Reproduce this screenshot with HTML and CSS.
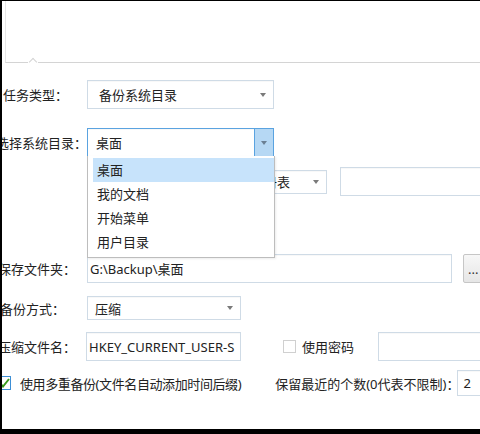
FILE: index.html
```html
<html>
<head>
  <title>备份任务</title>
  <meta charset="utf-8">
  <link rel="stylesheet" href="styles.css">
</head>
<body>
  <div class="window">
    <div class="topbar">
      <span class="tab-notch"></span>
    </div>
    <div class="form">
      <div class="row row-type">
        <label class="lbl lbl-type">任务类型：</label>
        <div class="combo combo-type">
          <span class="value">备份系统目录</span>
          <i class="caret"></i>
        </div>
      </div>

      <div class="row row-dir">
        <label class="lbl lbl-dir">选择系统目录：</label>
        <div class="combo combo-dir focused">
          <span class="value">桌面</span>
          <span class="drop-btn"><i class="caret"></i></span>
          <ul class="droplist">
            <li class="selected">桌面</li>
            <li>我的文档</li>
            <li>开始菜单</li>
            <li>用户目录</li>
          </ul>
        </div>
      </div>

      <div class="row row-reg">
        <span class="lbl"></span>
        <div class="combo combo-hive">
          <span class="value">当前用户</span>
          <i class="caret"></i>
        </div>
        <div class="combo combo-reg">
          <span class="value">注册表</span>
          <i class="caret"></i>
        </div>
        <div class="field field-reg"></div>
      </div>

      <div class="row row-folder">
        <label class="lbl lbl-folder">保存文件夹：</label>
        <div class="field field-folder">G:\Backup\桌面</div>
        <button class="browse">...</button>
      </div>

      <div class="row row-mode">
        <label class="lbl lbl-mode">备份方式：</label>
        <div class="combo combo-mode">
          <span class="value">压缩</span>
          <i class="caret"></i>
        </div>
      </div>

      <div class="row row-name">
        <label class="lbl lbl-name">压缩文件名：</label>
        <div class="field field-name">HKEY_CURRENT_USER-S</div>
        <span class="check"></span>
        <span class="check-text">使用密码</span>
        <div class="field field-pass"></div>
      </div>

      <div class="row row-multi">
        <span class="check checked">
          <svg width="11" height="10" viewBox="0 0 11 10"><path d="M1 5.2 L4 8.5 L10 1" fill="none" stroke="#3a9a1c" stroke-width="2"/></svg>
        </span>
        <span class="multi-text">使用多重备份(文件名自动添加时间后缀)</span>
        <span class="keep-text">保留最近的个数(0代表不限制)：</span>
        <div class="field field-keep">2</div>
      </div>
    </div>
  </div>
</body>
</html>
```

FILE: styles.css
```css
body {
  margin: 0;
  background: #fff;
}
.window {
  width: 480px;
  height: 434px;
  box-sizing: border-box;
  border-top: 1px solid #000;
  border-left: 2px solid #000;
  border-bottom: 5px solid #000;
  overflow: hidden;
  font-family: "Noto Sans", "Noto Sans CJK SC", sans-serif;
  font-size: 13px;
  color: #222;
}

/* strip above the form, closed by a thin rule */
.topbar {
  position: relative;
  height: 61px;
  margin-left: 3px;
  border-left: 1px solid #e6e6e6;
  border-bottom: 1px solid #d4d4d4;
}
.tab-notch {
  position: absolute;
  left: 22px;
  bottom: -1px;
  width: 10px;
  height: 4px;
  background: #fff;
}
.tab-notch::before {
  content: "";
  position: absolute;
  left: 2px;
  top: 0;
  width: 5px;
  height: 5px;
  border-left: 1px solid #d4d4d4;
  border-top: 1px solid #d4d4d4;
  transform: rotate(45deg);
  background: #fff;
}

.form {
  display: flex;
  flex-direction: column;
}
.row {
  display: flex;
  align-items: center;
  height: 29px;
}
.row > * {
  flex: none;
}
.row-type { margin-top: 17px; }
.row-dir { margin-top: 19px; position: relative; z-index: 2; }
.row-reg { margin-top: 10px; }
.row-folder { margin-top: 58px; }
.row-mode { margin-top: 13px; height: 24px; }
.row-name { margin-top: 12px; }
.row-multi { margin-top: 9px; height: 26px; }

.lbl {
  width: 85px;
  white-space: nowrap;
  box-sizing: border-box;
}
.lbl-type { padding-left: 1px; }
.lbl-dir { margin-left: -6px; width: 91px; }
.lbl-folder { margin-left: -4px; width: 89px; }
.lbl-mode { margin-left: -2px; width: 87px; }
.lbl-name { margin-left: -4px; width: 88px; }

/* combo boxes and text fields */
.combo,
.field {
  position: relative;
  box-sizing: border-box;
  height: 100%;
  border: 1px solid #cfdbe6;
  background: #fff;
  display: flex;
  align-items: center;
  white-space: nowrap;
  box-shadow: inset 0 1px 1px rgba(0, 0, 0, 0.03);
}
.combo .value {
  flex: 1;
  padding-left: 11px;
}
.caret {
  width: 0;
  height: 0;
  border-left: 3px solid transparent;
  border-right: 3px solid transparent;
  border-top: 4px solid #7a7a7a;
  margin-right: 7px;
}
.combo-type { width: 187px; }
.combo-dir { width: 187px; }
.combo-dir .value { padding-left: 8px; }

.focused {
  border-color: #5aa3e0;
}
.drop-btn {
  align-self: stretch;
  width: 18px;
  margin: -1px -1px -1px 0;
  border: 1px solid #5aa3e0;
  background: #b6d8f4;
  display: flex;
  align-items: center;
  justify-content: center;
}
.drop-btn .caret {
  margin: 0;
  border-top-color: #6b7f93;
}

/* open list of the focused combo */
.droplist {
  position: absolute;
  top: 100%;
  left: -1px;
  width: 188px;
  box-sizing: border-box;
  margin: 0;
  padding: 2px 0 3px 5px;
  list-style: none;
  background: #fff;
  border: 1px solid #bdbdbd;
  border-top: none;
  box-shadow: 1px 1px 2px rgba(0, 0, 0, 0.08);
}
.droplist li {
  height: 24px;
  line-height: 24px;
  padding-left: 4px;
}
.droplist li.selected {
  background: #c7e3fb;
}

.combo-hive { width: 143px; height: 24px; }
.combo-reg { width: 90px; height: 24px; margin-left: 7px; }
.combo-reg .value { padding-left: 13px; }
.field-reg { width: 150px; margin-left: 13px; }

.field-folder {
  width: 365px;
  padding-left: 2px;
}
.browse {
  margin-left: 11px;
  width: 30px;
  height: 100%;
  border: 1px solid #c6c6c6;
  border-radius: 2px;
  background: linear-gradient(#f7f7f7, #e6e6e6);
  font: inherit;
  text-align: left;
  padding: 0 0 0 4px;
  color: #333;
}

.combo-mode { width: 154px; }
.combo-mode .value { padding-left: 7px; }

.field-name {
  width: 155px;
  padding-left: 2px;
  overflow: hidden;
}
.check {
  box-sizing: border-box;
  width: 13px;
  height: 13px;
  border: 1px solid #d0d0d0;
  background: #fff;
  display: flex;
  align-items: center;
  justify-content: center;
}
.row-name .check { margin-left: 42px; }
.check-text { margin-left: 6px; white-space: nowrap; }
.field-pass {
  width: 120px;
  margin-left: 24px;
}

.row-multi .check.checked {
  margin-left: -5px;
  width: 14px;
  height: 14px;
  border-color: #3d8fd6;
}
.multi-text {
  margin-left: 9px;
  white-space: nowrap;
  letter-spacing: -0.4px;
}
.keep-text { margin-left: 34px; white-space: nowrap; }
.field-keep {
  width: 40px;
  margin-left: -2px;
  padding-left: 5px;
}
```
